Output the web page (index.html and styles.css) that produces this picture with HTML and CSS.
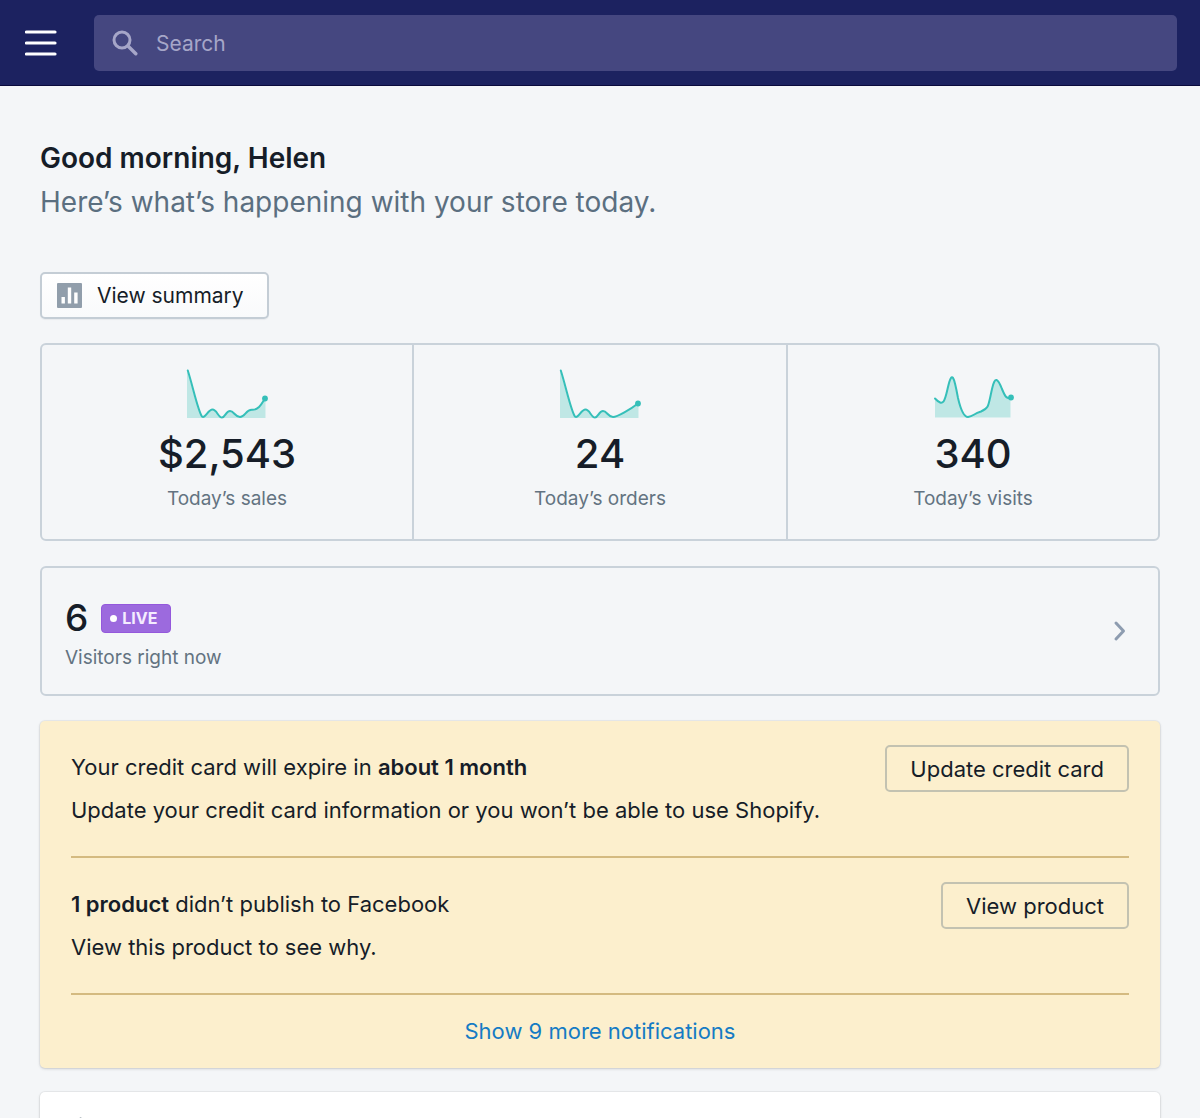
FILE: index.html
```html
<!DOCTYPE html>
<html lang="en">
<head>
<meta charset="utf-8">
<meta name="viewport" content="width=device-width, initial-scale=1">
<title>Home</title>
<link rel="stylesheet" href="styles.css">
</head>
<body>
<header class="topbar">
  <button class="menu-button" type="button" aria-label="Menu">
    <svg width="32" height="28" viewBox="0 0 32 28"><path d="M1.500 3h28.500M1.500 14h28.500M1.500 25h28.500" stroke="#fff" stroke-width="3.200" stroke-linecap="round"/></svg>
  </button>
  <label class="search">
    <svg width="26" height="26" viewBox="0 0 26 26" fill="none" stroke="#a6a6c8" stroke-width="3"><circle cx="10" cy="10" r="8"/><path d="M16 16l7.800 7.800" stroke-linecap="round" stroke-width="3.400"/></svg>
    <input class="search-input" type="search" placeholder="Search" aria-label="Search">
  </label>
</header>
<main class="content">
  <div class="intro">
    <h1 class="greeting">Good morning, Helen</h1>
    <p class="subtitle">Here’s what’s happening with your store today.</p>
  </div>
  <button class="button button-summary" type="button">
    <svg width="25" height="25" viewBox="0 0 25 25"><rect width="25" height="25" rx="1" fill="#919eab"/><path d="M4.500 14h3.400v6.500h-3.400zM10.800 4.500h3.400v16h-3.400zM17.200 9.500h3.400v11h-3.400z" fill="#fff"/></svg>
    View summary
  </button>

  <section class="panel stats">
    <div class="stat">
      <svg class="spark" width="84" height="52" viewBox="0 0 84 52"><path class="area" d="M2 3C7 20 13 44 17 49.500C22 51 23 43 28 43C32 43 33 50 37 50C41 50 41 44.500 45 44.500C49 44.500 50 50 55 50C60 50 61 43 67 43C74 44 77 36 80.500 31.500V51H2z"/><path class="line" d="M2.800 3.500C8 20 13 44 17 49.500C20 52 23 42.500 27.500 42.500C32 42.500 33 50.500 37 50.500C40 50.500 41 44 45 44C49 44 50 50 55 50C60 50 61 42.500 67 42.800C74 43 77 36 80 31.500"/><circle cx="80" cy="31.500" r="2.900"/></svg>
      <strong class="stat-value">$2,543</strong>
      <span class="stat-label">Today’s sales</span>
    </div>
    <div class="stat">
      <svg class="spark" width="84" height="52" viewBox="0 0 84 52"><path class="area" d="M2 3C7 20 13 44 17 49.500C22 51 23 43 28 43C32 43 33 50 37 50C41 50 41 44.500 45 44.500C49 44.500 50 50 55 50C59 50 73 42 80.500 37V51H2z"/><path class="line" d="M2.800 3.500C8 20 13 44 17 49.500C20 52 23 42.500 27.500 42.500C32 42.500 33 50.500 37 50.500C40 50.500 41 44 45 44C49 44 50 50 55 50C59 50 73 42 80 36.500"/><circle cx="80" cy="36.500" r="2.900"/></svg>
      <strong class="stat-value">24</strong>
      <span class="stat-label">Today’s orders</span>
    </div>
    <div class="stat">
      <svg class="spark" width="84" height="52" viewBox="0 0 84 52"><path class="area" d="M4 32C13 42 14 33 17 20C21 3 23 9 27 31C30 45 33 50 38 50C44 47 46 46 50 45C57 42 58 40 61 24C64 9 67 12 71 21C74 30 75 31 79.500 31V50.500H4z"/><path class="line" d="M4 31.500C13 41 14 33 17 20C21 3 23 9 27 31C30 44 33 50 37 50C43 49 42 47 50 44.500C58 41 57 40 61 22C64 8 67 12 71 22C74 29 75 32 80 31"/><circle cx="80" cy="30.500" r="2.900"/></svg>
      <strong class="stat-value">340</strong>
      <span class="stat-label">Today’s visits</span>
    </div>
  </section>

  <a class="panel live" href="#visitors">
    <span class="live-text">
      <span class="live-row"><strong class="live-count">6</strong><span class="badge">LIVE</span></span>
      <span class="stat-label">Visitors right now</span>
    </span>
    <svg width="14" height="22" viewBox="0 0 14 22" fill="none"><path d="M3 3L10.500 11L3 19" stroke="#8d9cb0" stroke-width="3" stroke-linecap="round" stroke-linejoin="round"/></svg>
  </a>

  <section class="card notices">
    <article class="notice">
      <div class="notice-text">
        <p>Your credit card will expire in <b>about 1 month</b></p>
        <p>Update your credit card information or you won’t be able to use Shopify.</p>
      </div>
      <button class="button button-outline" type="button">Update credit card</button>
    </article>
    <article class="notice">
      <div class="notice-text">
        <p><b>1 product</b> didn’t publish to Facebook</p>
        <p>View this product to see why.</p>
      </div>
      <button class="button button-outline" type="button">View product</button>
    </article>
    <a class="more" href="#notifications">Show 9 more notifications</a>
  </section>

  <section class="card task">
    <svg width="32" height="32" viewBox="0 0 32 32" fill="none" stroke="#637381" stroke-width="3" stroke-linejoin="round"><path d="M9.500 2L16 10V28H3V10z"/></svg>
  </section>
</main>
</body>
</html>
```
FILE: styles.css
```css
* { box-sizing: border-box; }
body {
  margin: 0;
  height: 100vh;
  display: flex;
  flex-direction: column;
  background: #f4f6f8;
  color: #161d28;
  font: 21px/28px Inter, "Liberation Sans", sans-serif;
}
h1, p { margin: 0; }
svg { display: block; flex: none; }
button, input { font: inherit; color: inherit; }

.topbar {
  flex: none;
  display: flex;
  align-items: center;
  gap: 37px;
  padding: 15px 23px 14px 25px;
  background: #1c2260;
  border-bottom: 1px solid #0a0a3c;
}
.menu-button { padding: 0; border: 0; background: none; }
.search {
  flex: 1;
  display: flex;
  align-items: center;
  gap: 18px;
  height: 56px;
  padding: 0 18px;
  border-radius: 5px;
  background: #454780;
}
.search-input {
  flex: 1;
  padding: 2px 0 0;
  border: 0;
  outline: 0;
  background: none;
  color: #fff;
}
.search-input::placeholder { color: #a6a6c8; opacity: 1; }

.content {
  flex: 1;
  min-height: 0;
  overflow-y: auto;
  scrollbar-width: none;
  padding: 50px 40px 0;
}
.intro { margin-bottom: 48px; }
.greeting { font-size: 28px; line-height: 44px; font-weight: 600; }
.subtitle { font-size: 28px; line-height: 44px; color: #5b6f80; }

.button {
  flex: none;
  display: flex;
  align-items: center;
  height: 47px;
  border: 2px solid #c4cdd5;
  border-radius: 5px;
}
.button-summary {
  gap: 15px;
  margin-bottom: 24px;
  padding: 0 23px 0 15px;
  background: linear-gradient(#fff, #f9fafb);
  box-shadow: 0 1px 1px #161d250d;
}
.button-outline { padding: 0 23px; border-color: #c3c2b1; background: none; }

.panel { border: 2px solid #c9d2da; border-radius: 6px; }
.stats {
  display: grid;
  grid-template-columns: 185fr 188fr 185fr;
  height: 198px;
  margin-bottom: 25px;
}
.stat {
  display: flex;
  flex-direction: column;
  align-items: center;
  padding-top: 22px;
}
.stat:nth-child(2) { border: solid #c9d2da; border-width: 0 2px; }
.spark .area { fill: #bfe7e5; }
.spark .line { fill: none; stroke: #35bfb9; stroke-width: 2; stroke-linecap: round; }
.spark circle { fill: #35bfb9; }
.stat-value { font-size: 40px; line-height: 70px; font-weight: 500; }
.stat-label { font-size: 19px; line-height: 20px; color: #637381; }

.live {
  display: flex;
  align-items: center;
  justify-content: space-between;
  height: 130px;
  margin-bottom: 25px;
  padding: 0 31px 0 23px;
  color: inherit;
  text-decoration: none;
}
.live-text { display: flex; flex-direction: column; gap: 6px; }
.live-row { display: flex; align-items: center; gap: 13px; }
.live-count { font-size: 37px; line-height: 48px; font-weight: 500; }
.badge {
  display: flex;
  align-items: center;
  gap: 5px;
  height: 29px;
  padding: 0 12px 0 8px;
  border: 1px solid #9458dc;
  border-radius: 4px;
  background: #9c6ade;
  color: #f4ecff;
  font-size: 16px;
  font-weight: 700;
}
.badge::before {
  content: "";
  width: 7px;
  height: 7px;
  border-radius: 50%;
  background: #fff;
}

.card {
  margin-bottom: 24px;
  border-radius: 5px;
  background: #fff;
  box-shadow: 0 0 0 1px #3f3f440d, 0 1px 3px #3f3f4433;
}
.notices { padding: 0 31px 23px; background: #fcefcd; font-size: 22px; }
.notice {
  display: flex;
  justify-content: space-between;
  align-items: flex-start;
  gap: 24px;
  padding: 24px 0 32px;
  border-bottom: 2px solid #d4ba80;
}
.notice-text { display: grid; gap: 15px; padding-top: 8px; }
.notice b { font-weight: 600; }
.more {
  display: block;
  padding-top: 22px;
  color: #157bc4;
  text-align: center;
  text-decoration: none;
}
.task { padding: 25px 31px; }
```
